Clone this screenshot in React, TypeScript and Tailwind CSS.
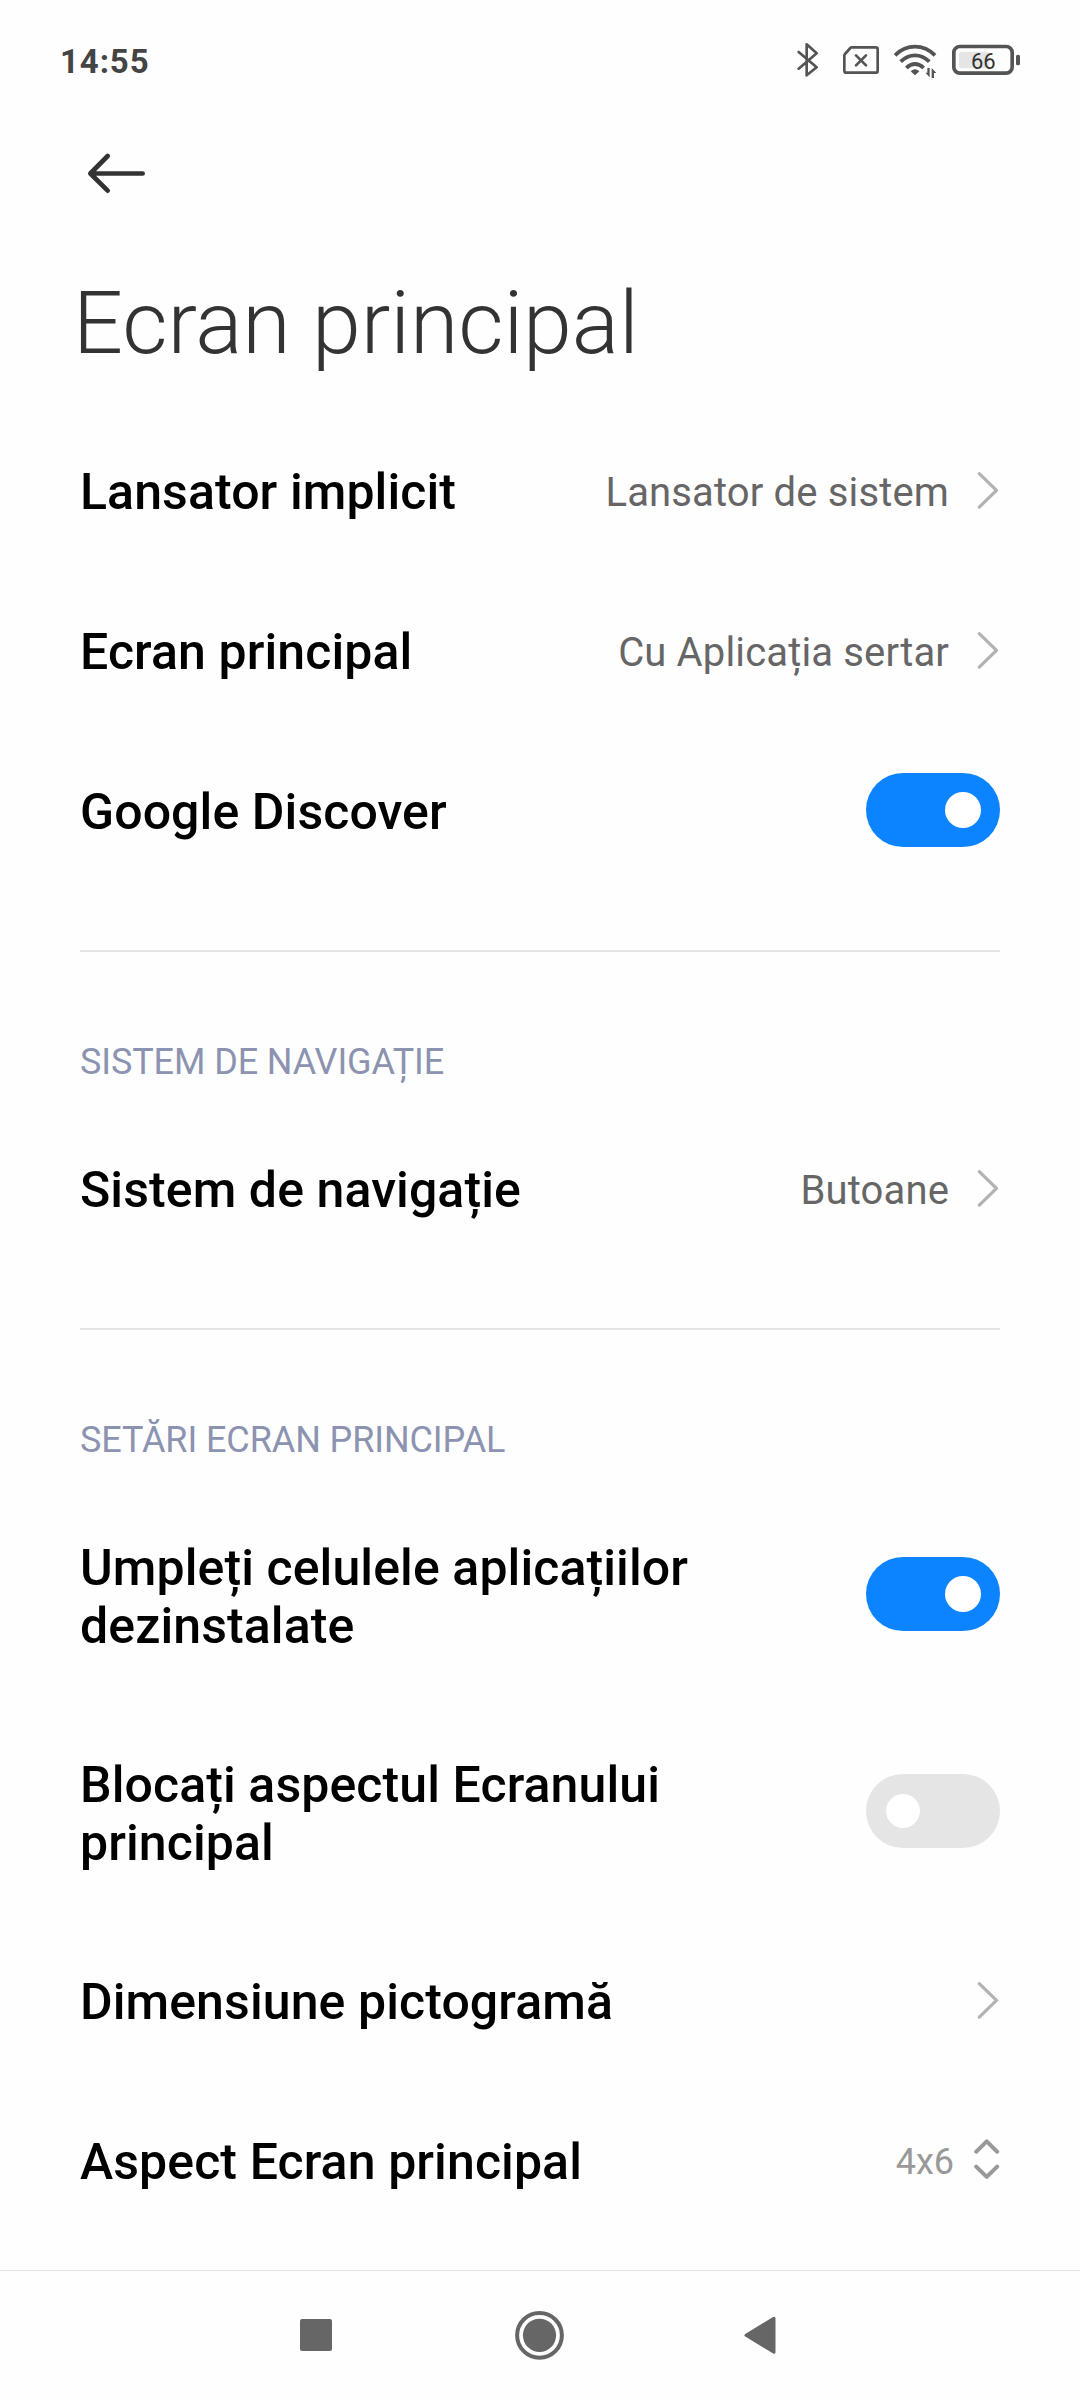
import type { ReactNode } from "react";

interface SettingRowProps {
  title: string;
  tall?: boolean;
  children?: ReactNode;
}

function StatusBar() {
  return (
    <div className="flex h-[120px] items-center justify-between pl-[60px] pr-[59px]">
      <span className="pt-[3px] text-[33px] leading-10 font-bold tracking-[0.9px] text-[#444444]">
        14:55
      </span>
      <div className="flex items-center text-[#545454]">
        {/* Bluetooth */}
        <svg
          viewBox="51 30 66 120"
          className="h-10 w-[22px]"
          fill="none"
          stroke="currentColor"
          strokeWidth="8"
          strokeLinecap="round"
          strokeLinejoin="round"
        >
          <path d="M56 66 110 112 80 136V43L110 70 56 116" />
        </svg>
        {/* No SIM */}
        <svg
          viewBox="186 30 114 120"
          className="ml-[23px] h-10 w-[38px]"
          fill="none"
          stroke="currentColor"
          strokeWidth="8"
          strokeLinecap="round"
          strokeLinejoin="round"
        >
          <path d="M215 52H287Q293 52 293 58V122Q293 128 287 128H199Q193 128 193 122V77Q193 74 195 72L211 54Q213 52 215 52Z" />
          <path d="M228 76 258 106M258 76 228 106" />
        </svg>
        {/* Wifi */}
        <svg
          viewBox="342 30 132 120"
          className="ml-[14px] h-10 w-11"
          fill="none"
          stroke="currentColor"
        >
          <path
            d="M345 76Q371 50 405 50T465 76M362 95Q381 76 405 76T448 95M379 114Q391 102 405 102T431 114"
            strokeWidth="11.5"
          />
          <path
            d="M392 124Q405 111 418 124Q411 131 405 136Q399 131 392 124Z"
            fill="currentColor"
            stroke="none"
          />
          <path
            d="M449 114V142L436 128H442V114ZM455 144V114L469 129H462V144Z"
            fill="currentColor"
            stroke="none"
          />
        </svg>
        {/* Battery */}
        <svg viewBox="513 30 210 120" className="ml-[13px] h-10 w-[70px]">
          <rect
            x="521.5"
            y="49.5"
            width="175"
            height="80"
            rx="18"
            fill="none"
            stroke="currentColor"
            strokeWidth="11"
          />
          <rect x="537" y="65" width="91" height="50" rx="8" fill="#e5e5e5" />
          <rect x="708" y="74" width="12" height="32" rx="5" fill="currentColor" />
          <text
            x="610"
            y="115.5"
            textAnchor="middle"
            fontSize="66"
            fill="#333333"
          >
            66
          </text>
        </svg>
      </div>
    </div>
  );
}

function Chevron() {
  return (
    <svg
      viewBox="0 0 24 40"
      className="h-10 w-6 shrink-0"
      fill="none"
      stroke="#b2b2b2"
      strokeWidth="3.2"
      strokeLinecap="round"
      strokeLinejoin="round"
    >
      <path d="M3.3 3.7 20.5 20.4 3.3 37.1" />
    </svg>
  );
}

function UpDown() {
  return (
    <svg
      viewBox="0 0 26 42"
      className="h-[42px] w-[26px] shrink-0"
      fill="none"
      stroke="#999999"
      strokeWidth="4"
      strokeLinecap="round"
      strokeLinejoin="round"
    >
      <path d="M2.2 12.7 12.7 2.4 23.2 12.7M2.2 27.6 12.7 37.9 23.2 27.6" />
    </svg>
  );
}

function Toggle({ on }: { on: boolean }) {
  return (
    <div
      className={`flex h-[74px] w-[134px] shrink-0 items-center rounded-full ${
        on ? "justify-end bg-[#0d84ff] pr-[19px]" : "bg-[#e5e5e5] pl-5"
      }`}
    >
      <div className={`rounded-full bg-white ${on ? "size-9" : "size-[34px]"}`} />
    </div>
  );
}

function SettingRow({ title, tall, children }: SettingRowProps) {
  return (
    <div
      className={`flex items-center justify-between ${tall ? "h-[217px] pb-px" : "h-40"}`}
    >
      <span
        className={`max-w-[660px] text-[50px] leading-[58px] font-medium tracking-[0.1px] text-black ${
          tall ? "pt-1.5" : "pt-1"
        }`}
      >
        {title}
      </span>
      {children}
    </div>
  );
}

function Value({ text }: { text: string }) {
  return (
    <div className="flex items-center">
      <span className="mr-[27px] pt-[5px] text-[40px] leading-[48px] tracking-[0.15px] text-[#666666]">
        {text}
      </span>
      <Chevron />
    </div>
  );
}

function SectionHeader({ label }: { label: string }) {
  return (
    <div className="mt-[60px] flex h-[158px] items-center border-t-2 border-[#e5e5e5] pt-16">
      <h2 className="text-[36px] leading-[42px] tracking-[-0.1px] text-[#8c93b0]">
        {label}
      </h2>
    </div>
  );
}

function NavigationBar() {
  return (
    <div className="flex h-[130px] items-center border-t border-[#e5e5e5] pb-px pl-[300px] text-[#666666]">
      <div className="size-8 rounded-[2px] bg-[#666666]" />
      <svg viewBox="0 0 50 50" className="ml-[183px] size-[50px]">
        <circle
          cx="24.5"
          cy="25.3"
          r="22.4"
          fill="none"
          stroke="currentColor"
          strokeWidth="4"
        />
        <circle cx="24.5" cy="25.3" r="16.6" fill="currentColor" />
      </svg>
      <svg viewBox="0 0 32 38" className="ml-[179px] h-[38px] w-8">
        <path
          d="M2 19.300 30 2.300V36.300Z"
          fill="currentColor"
          stroke="currentColor"
          strokeWidth="3"
          strokeLinejoin="round"
        />
      </svg>
    </div>
  );
}

export default function App() {
  return (
    <div className="flex h-[2400px] w-[1080px] flex-col overflow-hidden bg-[#fefefe] font-[Roboto,sans-serif]">
      <StatusBar />

      <header className="flex h-[290px] flex-col items-start pt-[30px]">
        <svg
          viewBox="141 390 180 138"
          className="ml-[87px] h-[46px] w-[60px]"
          fill="none"
          stroke="#333333"
          strokeWidth="14"
          strokeLinecap="round"
          strokeLinejoin="round"
        >
          <path d="M308 460.500H151M203 408 151 460.500 203 512" />
        </svg>
        <h1 className="mt-[75px] ml-[73px] text-[88px] leading-[104px] font-light tracking-[-0.1px] whitespace-nowrap text-[#333333]">
          Ecran principal
        </h1>
      </header>

      <main className="flex-1 px-20">
        <SettingRow title="Lansator implicit">
          <Value text="Lansator de sistem" />
        </SettingRow>
        <SettingRow title="Ecran principal">
          <Value text="Cu Aplicația sertar" />
        </SettingRow>
        <SettingRow title="Google Discover">
          <Toggle on />
        </SettingRow>

        <SectionHeader label="SISTEM DE NAVIGAȚIE" />
        <SettingRow title="Sistem de navigație">
          <Value text="Butoane" />
        </SettingRow>

        <SectionHeader label="SETĂRI ECRAN PRINCIPAL" />
        <SettingRow title="Umpleți celulele aplicațiilor dezinstalate" tall>
          <Toggle on />
        </SettingRow>
        <SettingRow title="Blocați aspectul Ecranului principal" tall>
          <Toggle on={false} />
        </SettingRow>
        <SettingRow title="Dimensiune pictogramă">
          <Chevron />
        </SettingRow>
        <SettingRow title="Aspect Ecran principal">
          <div className="flex items-center">
            <span className="mr-5 pt-[3px] text-[36px] leading-[42px] text-[#999999]">
              4x6
            </span>
            <UpDown />
          </div>
        </SettingRow>
      </main>

      <NavigationBar />
    </div>
  );
}
